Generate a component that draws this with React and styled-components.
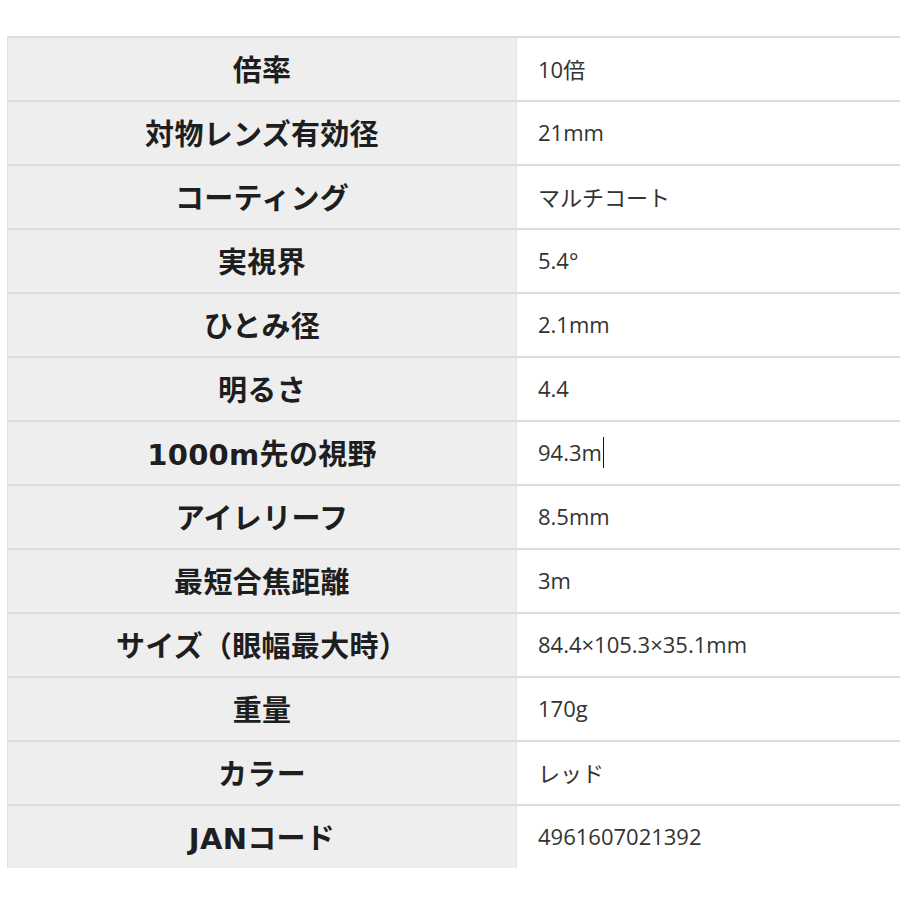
import React from "react";
import styled, { createGlobalStyle } from "styled-components";

const Global = createGlobalStyle`
  html, body { margin: 0; padding: 0; background: #fff; overflow: hidden; }
  body { font-family: "Open Sans", "Noto Sans CJK JP", sans-serif; }
`;

const Page = styled.div`
  padding: 36px 0 0 7px;
  width: 900px;
  box-sizing: border-box;
`;

const Table = styled.div`
  display: grid;
  grid-template-columns: 508px 1fr;
  border-left: 1px solid #e2e2e2;
`;

const Head = styled.div`
  box-sizing: border-box;
  height: 64px;
  background: #eeeeee;
  border-top: 2px solid #dcdcdc;
  display: flex;
  align-items: center;
  justify-content: center;
  font-family: "DejaVu Sans", "Noto Sans CJK JP", sans-serif;
  font-weight: 700;
  font-size: 29px;
  color: #1e1e1e;
  padding-bottom: 2px;
  letter-spacing: 0.3px;
`;

const Value = styled.div`
  box-sizing: border-box;
  height: 64px;
  background: #fff;
  border-top: 2px solid #dcdcdc;
  border-left: 1px solid #e4e4e4;
  display: flex;
  align-items: center;
  padding-left: 21px;
  font-family: "Open Sans", "Noto Sans CJK JP", sans-serif;
  font-size: 22px;
  color: #333;
  padding-bottom: 2px;
`;

const Caret = styled.span`
  display: inline-block;
  width: 1px;
  height: 31px;
  background: #111;
  margin-left: 1px;
  vertical-align: middle;
`;

const rows = [
  ["倍率", "10倍"],
  ["対物レンズ有効径", "21mm"],
  ["コーティング", "マルチコート"],
  ["実視界", "5.4°"],
  ["ひとみ径", "2.1mm"],
  ["明るさ", "4.4"],
  ["1000m先の視野", "94.3m", true],
  ["アイレリーフ", "8.5mm"],
  ["最短合焦距離", "3m"],
  ["サイズ（眼幅最大時）", "84.4×105.3×35.1mm"],
  ["重量", "170g"],
  ["カラー", "レッド"],
  ["JANコード", "4961607021392"],
];

export default function App() {
  return (
    <>
      <Global />
      <Page>
        <Table>
          {rows.map(([k, v, caret]) => (
            <React.Fragment key={k}>
              <Head>{k}</Head>
              <Value>
                {v}
                {caret && <Caret />}
              </Value>
            </React.Fragment>
          ))}
        </Table>
      </Page>
    </>
  );
}
